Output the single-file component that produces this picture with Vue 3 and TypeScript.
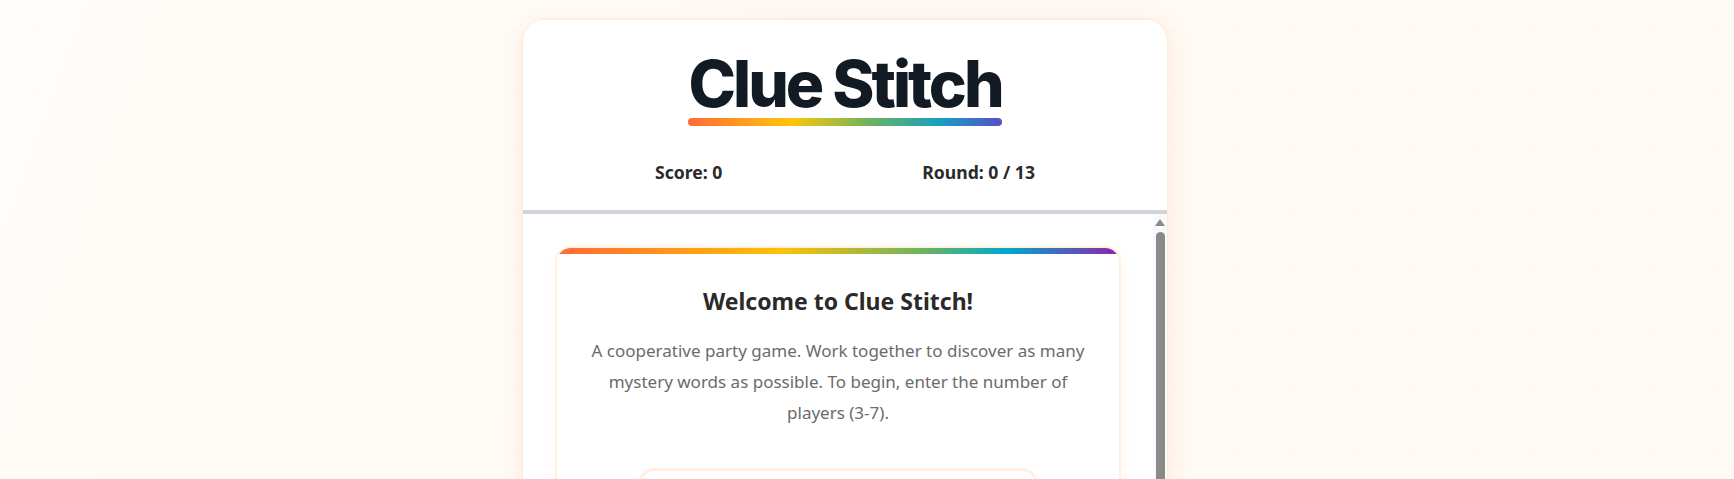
<template>
  <div class="page">
    <main class="shell">
      <header class="head">
        <div class="logo-wrap">
          <h1 class="logo">Clue Stitch</h1>
          <div class="logo-bar"></div>
        </div>
        <div class="stats">
          <span class="stat">Score: {{ score }}</span>
          <span class="stat">Round: {{ round }} / {{ totalRounds }}</span>
        </div>
      </header>

      <div class="body">
        <div class="scroll-area">
          <section class="welcome">
            <h2 class="welcome-title">Welcome to Clue Stitch!</h2>
            <p class="welcome-text">
              A cooperative party game. Work together to discover as many mystery words as possible. To begin, enter the
              number of players (3-7).
            </p>
            <div class="player-box"></div>
          </section>
        </div>
        <div class="rail">
          <span class="rail-arrow"></span>
          <span class="rail-thumb"></span>
        </div>
      </div>
    </main>
  </div>
</template>

<script setup lang="ts">
import { ref } from "vue";

const score = ref<number>(0);
const round = ref<number>(0);
const totalRounds = 13;
</script>

<style>
html,
body {
  margin: 0;
  height: 100%;
  overflow: hidden;
  background: #fff9f3;
}
</style>

<style scoped>
.page {
  height: 479px;
  overflow: hidden;
  display: flex;
  justify-content: center;
  padding: 18px 44px 0 0;
  box-sizing: border-box;
  background-color: #fff9f3;
  background-image:
    radial-gradient(circle at 35px 30px, rgba(255, 170, 120, 0.04) 1.5px, transparent 2.5px),
    linear-gradient(110deg, #fffdf9 0%, #fffaf5 45%, #fffaf3 100%);
  background-size: 60px 60px, 100% 100%;
  font-family: "Noto Sans", "Open Sans", sans-serif;
}

.shell {
  width: 646px;
  height: 700px;
  flex: none;
  box-sizing: border-box;
  background: #fff;
  border: 1px solid #ffecd6;
  border-radius: 24px;
  box-shadow: 0 6px 24px rgba(255, 107, 53, 0.13);
  overflow: hidden;
}

.head {
  height: 195px;
  box-sizing: border-box;
  border-top: 1px solid #eceef2;
  border-bottom: 4px solid #d1d5db;
  padding-top: 32px;
  display: flex;
  flex-direction: column;
  align-items: center;
}

.logo-wrap {
  display: flex;
  flex-direction: column;
  align-items: stretch;
}

.logo {
  margin: 0;
  font-family: Inter, sans-serif;
  font-size: 64px;
  font-weight: 800;
  line-height: 64px;
  letter-spacing: -3px;
  color: #121a23;
  white-space: nowrap;
}

.logo-bar {
  height: 8px;
  margin-top: 2px;
  border-radius: 4px;
  background: linear-gradient(90deg, #ff6b35, #ffc60a 33%, #6cb35f 58%, #1a9fbf 80%, #5a4fc4);
}

.stats {
  margin-top: 34px;
  align-self: stretch;
  padding: 0 32px;
  display: flex;
  justify-content: space-around;
}

.stat {
  font-size: 17.6px;
  font-weight: 700;
  color: #2a2a2a;
}

.body {
  display: flex;
}

.scroll-area {
  flex: 1;
  padding: 32px 32px 0;
  min-width: 0;
}

.welcome {
  box-sizing: border-box;
  position: relative;
  overflow: hidden;
  height: 500px;
  padding: 37px 32px;
  background: #fff;
  border: 2px solid #fff0e0;
  border-radius: 16px;
  box-shadow: 0 4px 16px rgba(255, 140, 60, 0.05);
  text-align: center;
}

.welcome::before {
  content: "";
  position: absolute;
  left: 0;
  right: 0;
  top: 0;
  height: 6px;
  background: linear-gradient(90deg, #ff6b35, #ffc107 40%, #6cb35f 65%, #00a8cc 80%, #8e24aa);
}

.welcome-title {
  margin: 0;
  font-size: 23px;
  font-weight: 700;
  color: #2a2a2a;
}

.welcome-text {
  margin: 19px 0 0;
  font-size: 17px;
  line-height: 30.8px;
  color: #6b6b6b;
}

.player-box {
  width: 400px;
  height: 120px;
  margin: 40px auto 0;
  box-sizing: border-box;
  border: 3px solid #fff0e0;
  border-radius: 16px;
}

.rail {
  width: 14px;
  flex: none;
  height: 500px;
  background: #fafafa;
  display: flex;
  flex-direction: column;
  align-items: center;
  padding-top: 5px;
  gap: 6px;
}

.rail-arrow {
  width: 0;
  height: 0;
  border-left: 5px solid transparent;
  border-right: 5px solid transparent;
  border-bottom: 7px solid #8a8a8a;
}

.rail-thumb {
  width: 9px;
  height: 400px;
  border-radius: 5px 5px 0 0;
  background: #8a8a8a;
}
</style>
